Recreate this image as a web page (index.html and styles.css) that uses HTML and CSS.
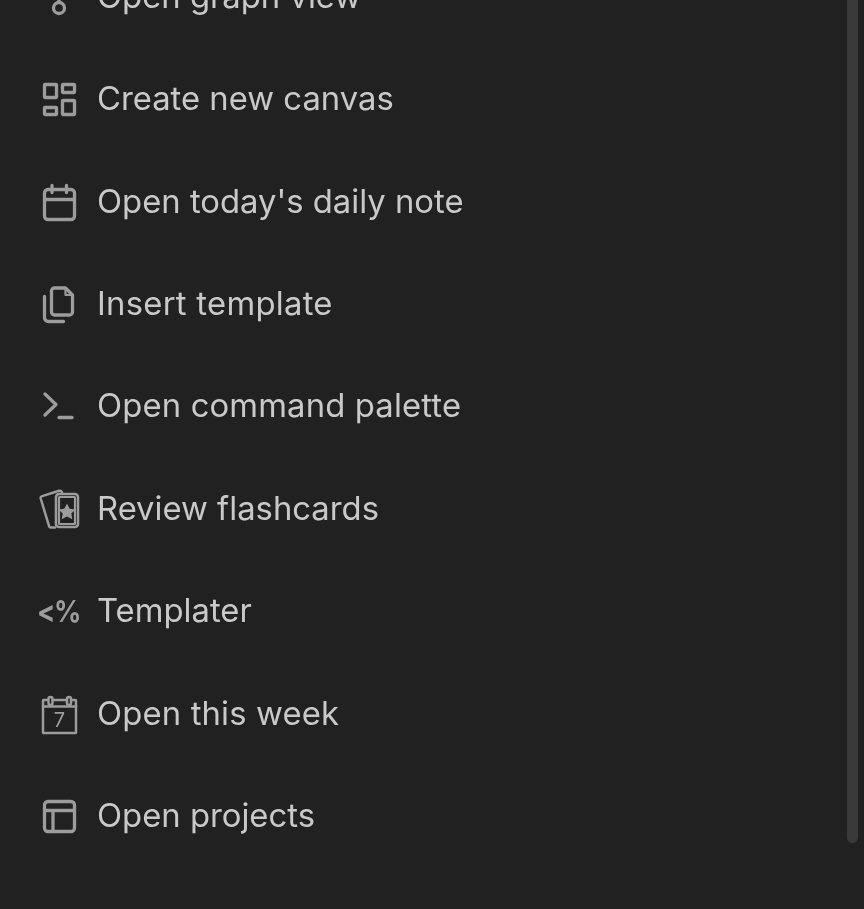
FILE: index.html
```html
<!DOCTYPE html>
<html lang="en">
<head>
<meta charset="utf-8">
<title>Commands</title>
<link rel="stylesheet" href="styles.css">
</head>
<body>
<main class="panel">
  <ul class="list">
    <li class="row"><svg class="icon" viewBox="0 0 40 40"><circle cx="20" cy="31" r="5.500"/><path d="M20 25.500V20"/></svg><span class="label">Open graph view</span></li>
    <li class="row"><svg class="icon" viewBox="0 0 40 40"><rect x="5.500" y="5.500" width="12" height="13" rx=".5"/><rect x="23.500" y="5.500" width="12" height="8" rx=".5"/><rect x="23.500" y="21.500" width="12" height="14" rx=".5"/><rect x="5.500" y="28.500" width="12" height="7" rx=".5"/></svg><span class="label">Create new canvas</span></li>
    <li class="row"><svg class="icon" viewBox="0 0 40 40"><rect x="5.500" y="7.500" width="30" height="30" rx="3.500"/><path d="M13 3.500v7M27.500 3.500v7M5.500 17.500h30"/></svg><span class="label">Open today's daily note</span></li>
    <li class="row"><svg class="icon" viewBox="0 0 40 40"><path d="M12.500 7a3 3 0 0 1 3-3h11l7 7v17a3 3 0 0 1-3 3h-15a3 3 0 0 1-3-3z"/><path d="M26.500 4v7h7" class="thin"/><path d="M5.500 12.500v21a4 4 0 0 0 4 4h15"/></svg><span class="label wide">Insert template</span></li>
    <li class="row"><svg class="icon" viewBox="0 0 40 40"><path d="M6 8l11 10.500L6 29"/><path d="M20 31.500h13"/></svg><span class="label snug">Open command palette</span></li>
    <li class="row"><svg class="icon" viewBox="0 0 40 40"><path class="mid" d="M16 38.500h-4a2 2 0 0 1-2-1.600L1.700 9.500a2 2 0 0 1 1.500-2.400L20 1.800a2.500 2.500 0 0 1 3 1.500"/><rect class="mid" x="17" y="5" width="22" height="33" rx="3"/><rect class="thin" x="20" y="8" width="16" height="27" rx=".5"/><path class="solid" d="M28 14.500l2.700 5.200 5.700.8-4.100 4 1 5.700-5.300-2.700-5.300 2.700 1-5.700-4.100-4 5.700-.8z"/></svg><span class="label">Review flashcards</span></li>
    <li class="row"><span class="glyph">&lt;%</span><span class="label">Templater</span></li>
    <li class="row"><svg class="icon" viewBox="0 0 40 40"><rect class="mid" x="4" y="6" width="33" height="33" rx=".5"/><path class="mid" d="M4 12.500h33"/><rect class="cap" x="9.500" y="3" width="4" height="8" rx="2"/><rect class="cap" x="28" y="3" width="4" height="8" rx="2"/><text class="day" x="20.500" y="33">7</text></svg><span class="label snug">Open this week</span></li>
    <li class="row"><svg class="icon" viewBox="0 0 40 40"><rect x="5.500" y="5.500" width="30" height="30" rx="3.500"/><path d="M5.500 14.500h30M14 14.500v21"/></svg><span class="label">Open projects</span></li>
  </ul>
  <div class="scrollbar"></div>
</main>
</body>
</html>
```
FILE: styles.css
```css
* { box-sizing: border-box; }
html, body { margin: 0; height: 100%; background: #212121; }
.panel {
  position: relative;
  height: 909px;
  overflow: hidden;
  background: #212121;
  color: #c9c9c9;
  font-family: Inter, "Liberation Sans", sans-serif;
  font-size: 32.8px;
}
.list {
  list-style: none;
  margin: -54.300px 0 0;
  padding: 0 0 0 39px;
  filter: blur(0.45px);
}
.row {
  display: flex;
  align-items: center;
  gap: 18px;
  height: 102.4px;
}
.label { position: relative; top: -1px; }
.wide { letter-spacing: 0.27px; }
.snug { letter-spacing: 0.15px; }
.icon {
  width: 40px;
  height: 40px;
  flex: none;
  overflow: visible;
  fill: none;
  stroke: #9c9c9c;
  stroke-width: 3.300;
  stroke-linecap: round;
  stroke-linejoin: round;
}
.icon .thin { stroke-width: 2.200; }
.icon .mid { stroke-width: 2.500; }
.icon .cap { fill: #212121; stroke-width: 2.500; }
.icon .solid { fill: #9c9c9c; stroke: none; }
.icon .day {
  fill: #9c9c9c;
  stroke: none;
  font-size: 20px;
  text-anchor: middle;
  font-family: Inter, sans-serif;
}
.glyph {
  display: inline-block;
  width: 42px;
  margin-left: -2px;
  flex: none;
  color: #9c9c9c;
  font-size: 30px;
  font-weight: 700;
  letter-spacing: -1.500px;
  white-space: nowrap;
  transform: scaleX(0.9);
  transform-origin: left center;
}
.scrollbar {
  position: absolute;
  top: -10px;
  right: 6px;
  width: 11px;
  height: 853px;
  border-radius: 6px;
  background: #3a3a3a;
}
```
